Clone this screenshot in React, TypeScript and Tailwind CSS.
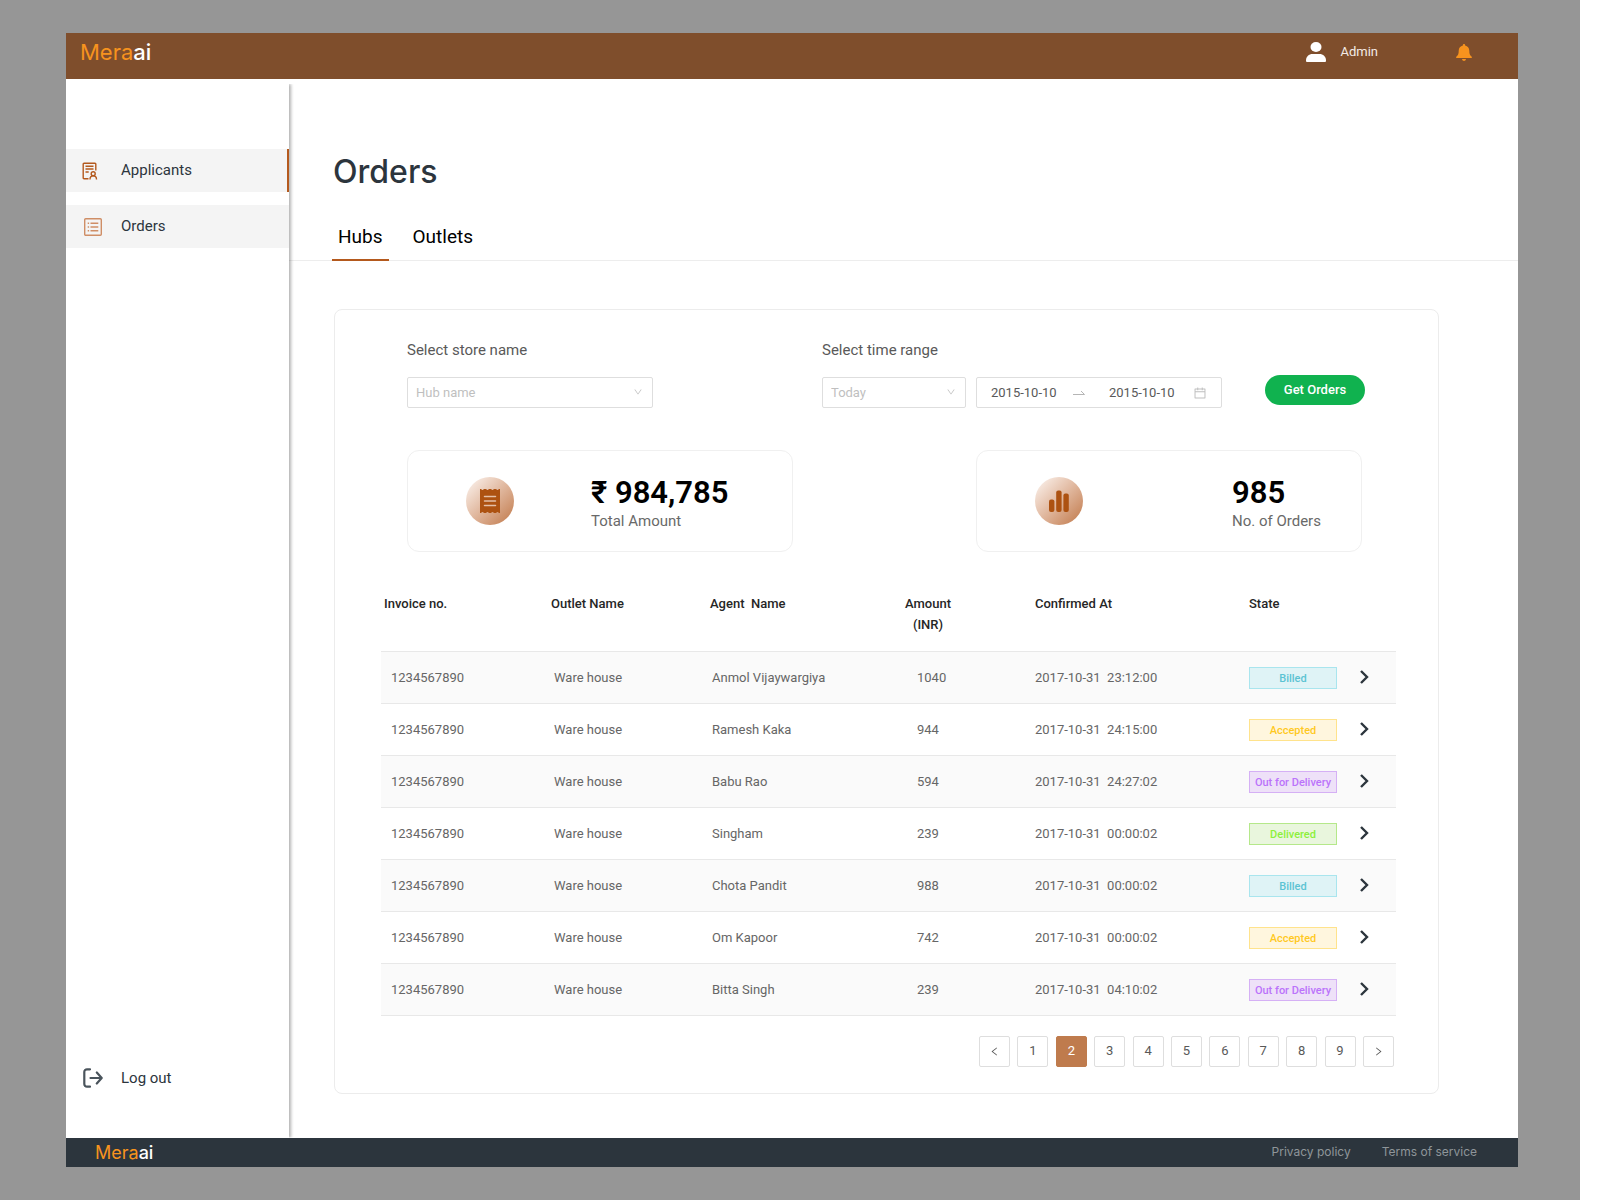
import { AiOutlineCalendar, AiOutlineDown, AiOutlineLeft, AiOutlineRight } from 'react-icons/ai';

type OrderState = 'Billed' | 'Accepted' | 'Out for Delivery' | 'Delivered';

interface Order {
  id: number;
  invoice: string;
  outlet: string;
  agent: string;
  amount: number;
  date: string;
  time: string;
  state: OrderState;
}

const orders: Order[] = [
  { id: 1, invoice: '1234567890', outlet: 'Ware house', agent: 'Anmol Vijaywargiya', amount: 1040, date: '2017-10-31', time: '23:12:00', state: 'Billed' },
  { id: 2, invoice: '1234567890', outlet: 'Ware house', agent: 'Ramesh Kaka', amount: 944, date: '2017-10-31', time: '24:15:00', state: 'Accepted' },
  { id: 3, invoice: '1234567890', outlet: 'Ware house', agent: 'Babu Rao', amount: 594, date: '2017-10-31', time: '24:27:02', state: 'Out for Delivery' },
  { id: 4, invoice: '1234567890', outlet: 'Ware house', agent: 'Singham', amount: 239, date: '2017-10-31', time: '00:00:02', state: 'Delivered' },
  { id: 5, invoice: '1234567890', outlet: 'Ware house', agent: 'Chota Pandit', amount: 988, date: '2017-10-31', time: '00:00:02', state: 'Billed' },
  { id: 6, invoice: '1234567890', outlet: 'Ware house', agent: 'Om Kapoor', amount: 742, date: '2017-10-31', time: '00:00:02', state: 'Accepted' },
  { id: 7, invoice: '1234567890', outlet: 'Ware house', agent: 'Bitta Singh', amount: 239, date: '2017-10-31', time: '04:10:02', state: 'Out for Delivery' },
];

const stateStyles: Record<OrderState, string> = {
  Billed: 'bg-[#dff3f6] border-[#a9e5ee] text-[#5cc3d3]',
  Accepted: 'bg-[#fff6de] border-[#ffe38c] text-[#ffc91f]',
  'Out for Delivery': 'bg-[#eee1f8] border-[#d5b0f5] text-[#bb73fb]',
  Delivered: 'bg-[#e9f6dd] border-[#b5e88a] text-[#8cf03c]',
};

const pages = [1, 2, 3, 4, 5, 6, 7, 8, 9];

function Logo({ className }: { className: string }) {
  return (
    <span className={`font-[Inter,sans-serif] text-[#f7931e] ${className}`}>
      Mera<span className="font-medium text-white">ai</span>
    </span>
  );
}

function ApplicantsIcon() {
  return (
    <svg width="16" height="18" viewBox="0 0 16 18" fill="none" stroke="#b4591d" strokeWidth="1.4">
      <path d="M6.5 16.8H2a.8.8 0 0 1-.8-.8V2a.8.8 0 0 1 .8-.8h11a.8.8 0 0 1 .8.8v6.500" />
      <path d="M3.500 4.300h8M3.500 7h8M3.500 10h3.200" />
      <circle cx="11.200" cy="11.700" r="2" />
      <path d="M8 17.400c0-2 1.200-3.500 3.200-3.500s3.300 1.500 3.300 3.500" />
    </svg>
  );
}

function OrdersIcon() {
  return (
    <svg width="18" height="18" viewBox="0 0 18 18" fill="none" stroke="#cf8e66" strokeWidth="1.4">
      <rect x="0.7" y="0.7" width="16.6" height="16.6" rx="1" />
      <path d="M6.500 5.300h7.800M6.500 9h7.800M6.500 12.700h7.800M3.700 5.300h1.400M3.700 9h1.400M3.700 12.700h1.400" />
    </svg>
  );
}

function LogoutIcon() {
  return (
    <svg width="20" height="20" viewBox="0 0 20 20" fill="none" stroke="#4a545c" strokeWidth="2.2" strokeLinecap="round" strokeLinejoin="round">
      <path d="M7 1.300H4a2.700 2.700 0 0 0-2.700 2.700v12A2.700 2.700 0 0 0 4 18.700h3" />
      <path d="M7.500 10H18.500M13.800 4.500L18.700 10l-4.900 5.500" />
    </svg>
  );
}

function UserIcon() {
  return (
    <svg width="20" height="20" viewBox="0 0 20 20" fill="white">
      <ellipse cx="10" cy="5" rx="5.500" ry="5" />
      <path d="M0 19v-.5C0 14.500 3 12 6.500 12h7c3.500 0 6.500 2.500 6.500 6.500v.5a1 1 0 0 1-1 1H1a1 1 0 0 1-1-1z" />
    </svg>
  );
}

function BellIcon() {
  return (
    <svg width="16" height="17" viewBox="0 0 16 17" fill="#f7931e">
      <path d="M8 0c.7 0 1.100.5 1.100 1.100v.5c2.500.5 4.200 2.500 4.200 5.200 0 3 .4 4.500 2.400 5.900.5.400.3 1.300-.4 1.300H.7c-.7 0-.9-.9-.4-1.300 2-1.400 2.400-2.900 2.400-5.900 0-2.700 1.700-4.700 4.200-5.200v-.5C6.900.5 7.300 0 8 0z" />
      <path d="M6 15h4c-.2 1.200-1 2-2 2s-1.800-.8-2-2z" />
    </svg>
  );
}

function ReceiptIcon() {
  return (
    <svg width="20" height="24" viewBox="0 0 20 24">
      <path
        fill="#ad5211"
        d="M0 0h1.200a1.400 1.400 0 0 0 2.600 0h2.400a1.400 1.400 0 0 0 2.600 0h2.400a1.400 1.400 0 0 0 2.600 0h2.400a1.400 1.400 0 0 0 2.600 0H20v24h-1.200a1.400 1.400 0 0 0-2.600 0h-2.400a1.400 1.400 0 0 0-2.600 0H8.800a1.400 1.400 0 0 0-2.600 0H3.800a1.400 1.400 0 0 0-2.600 0H0z"
      />
      <path stroke="#e4c0a8" strokeWidth="1.500" strokeLinecap="round" d="M4.500 7.500h11M4.500 12h11M4.500 16.500h11" />
    </svg>
  );
}

function BarsIcon() {
  return (
    <svg width="20" height="22" viewBox="0 0 20 22" fill="#ad5211">
      <rect x="0" y="9.500" width="5.400" height="12.500" rx="2" />
      <rect x="7.200" y="0.500" width="5.400" height="21.500" rx="2" />
      <rect x="14.400" y="3.500" width="5.400" height="18.500" rx="2" />
    </svg>
  );
}

function StatCard({ icon, value, label, gap }: { icon: React.ReactNode; value: string; label: string; gap: string }) {
  return (
    <div className={`flex h-[102px] w-[386px] items-center rounded-xl border border-[#f0f0f0] pl-[58px] ${gap}`}>
      <div className="flex size-12 items-center justify-center rounded-full bg-linear-to-br from-[#fdf8f5] to-[#bf7746]">
        {icon}
      </div>
      <div className="pt-2">
        <p className="text-[31px] leading-8 font-semibold text-black">{value}</p>
        <p className="text-[15px] leading-6 text-[#696969]">{label}</p>
      </div>
    </div>
  );
}

function StoreSelect({ id, placeholder, className }: { id: string; placeholder: string; className: string }) {
  return (
    <div className={`relative ${className}`}>
      <select
        id={id}
        className="h-[31px] w-full appearance-none rounded-xs border border-[#dedede] bg-white px-2 text-[13px] text-[#bfbfbf]"
      >
        <option>{placeholder}</option>
      </select>
      <AiOutlineDown className="pointer-events-none absolute top-[10px] right-[10px] text-[#bfbfbf]" size={10} />
    </div>
  );
}

export default function App() {
  return (
    <div className="bg-white pr-[17px] font-[Roboto,sans-serif]">
      <div className="flex min-h-screen flex-col bg-[#969696] pt-[33px] pr-[62px] pb-[34px] pl-[66px]">
        <header className="flex h-[46px] items-center bg-[#7f4e2c] pr-[46px] pb-2 pl-[14px]">
          <Logo className="text-[22px]" />
          <div className="ml-auto flex items-center">
            <UserIcon />
            <span className="ml-[14px] text-[13px] text-[#f3ebe6]">Admin</span>
            <button type="button" aria-label="Notifications" className="ml-[78px]">
              <BellIcon />
            </button>
          </div>
        </header>

        <div className="flex flex-1 bg-white">
          <aside className="mt-[5px] flex w-[223px] shrink-0 flex-col pt-[65px] text-[15px] text-[#2c353d] shadow-[2px_0_3px_rgba(0,0,0,0.3)] [clip-path:inset(0_-6px_0_0)]">
            <nav className="flex flex-col gap-[13px]">
              <a href="#applicants" className="flex h-[43px] items-center border-r-2 border-[#b4591d] bg-[#f4f4f4] pl-4">
                <span className="w-[39px]">
                  <ApplicantsIcon />
                </span>
                Applicants
              </a>
              <a href="#orders" className="flex h-[43px] items-center bg-[#f4f4f4] pl-4">
                <span className="w-[39px] pl-[2px]">
                  <OrdersIcon />
                </span>
                Orders
              </a>
            </nav>
            <a href="#logout" className="mt-auto mb-12 flex items-center pl-4">
              <span className="w-[39px] pl-px">
                <LogoutIcon />
              </span>
              Log out
            </a>
          </aside>

          <main className="min-w-0 flex-1 pb-11">
            <h1 className="pt-[69px] pl-11 font-[Inter,sans-serif] text-[32px] leading-12 font-medium text-[#2c353d]">
              Orders
            </h1>
            <div role="tablist" className="mt-[23px] flex h-[42px] gap-[18px] border-b border-[#ededed] pl-[43px] text-[19px] text-black">
              <button type="button" role="tab" aria-selected="true" className="h-[42px] border-b-2 border-[#b4591d] px-[6px] pb-1">
                Hubs
              </button>
              <button type="button" role="tab" aria-selected="false" className="h-[42px] border-b-2 border-transparent px-[6px] pb-1">
                Outlets
              </button>
            </div>

            <section className="mt-12 mr-[79px] ml-[45px] rounded-lg border border-[#ececec] pr-[42px] pb-[26px] pl-[46px]">
              <div className="flex items-end pt-7 pl-[26px]">
                <div>
                  <label htmlFor="store" className="mb-[15px] block text-[15px] leading-6 text-[#595959]">
                    Select store name
                  </label>
                  <StoreSelect id="store" placeholder="Hub name" className="w-[246px]" />
                </div>
                <div className="ml-[169px]">
                  <label htmlFor="range" className="mb-[15px] block text-[15px] leading-6 text-[#595959]">
                    Select time range
                  </label>
                  <div className="flex gap-[10px]">
                    <StoreSelect id="range" placeholder="Today" className="w-36" />
                    <div className="flex h-[31px] w-[246px] items-center rounded-xs border border-[#dedede] px-[14px] text-[#595959]">
                      <input aria-label="Start date" defaultValue="2015-10-10" className="w-[82px] text-[13px]" />
                      <svg width="12" height="6" viewBox="0 0 12 6" fill="none" stroke="#b5b5b5">
                        <path d="M0 4.500h11.500L8 1" />
                      </svg>
                      <input aria-label="End date" defaultValue="2015-10-10" className="ml-6 w-[84px] text-[13px]" />
                      <AiOutlineCalendar className="shrink-0 text-[#bfbfbf]" size={14} />
                    </div>
                  </div>
                </div>
                <button type="button" className="mb-[3px] ml-[43px] h-[30px] w-[100px] rounded-full bg-[#10b24f] text-[13px] font-medium text-white">
                  Get Orders
                </button>
              </div>

              <div className="mt-[42px] flex gap-[183px] pl-[26px]">
                <StatCard icon={<ReceiptIcon />} value="₹ 984,785" label="Total Amount" gap="gap-[77px]" />
                <StatCard icon={<BarsIcon />} value="985" label="No. of Orders" gap="gap-[149px]" />
              </div>

              <table className="mt-[41px] w-full table-fixed text-left text-[13px] text-[#666666]">
                <colgroup>
                  <col className="w-[163px]" />
                  <col className="w-[158px]" />
                  <col className="w-[196px]" />
                  <col className="w-[126px]" />
                  <col className="w-[214px]" />
                  <col className="w-[108px]" />
                  <col />
                </colgroup>
                <thead>
                  <tr className="h-[58px] border-b border-[#e8e8e8] align-top leading-[21px] text-[#262626]">
                    <th className="pl-[3px] font-medium">Invoice no.</th>
                    <th className="pl-[7px] font-medium">Outlet Name</th>
                    <th className="pl-2 font-medium whitespace-pre">Agent  Name</th>
                    <th className="pl-[7px] font-medium">
                      <span className="inline-block text-center">
                        Amount
                        <br />
                        (INR)
                      </span>
                    </th>
                    <th className="pl-[11px] font-medium">Confirmed At</th>
                    <th className="pl-[11px] font-medium">State</th>
                    <td />
                  </tr>
                </thead>
                <tbody>
                  {orders.map((order) => (
                    <tr key={order.id} className="h-[52px] border-b border-[#e8e8e8] odd:bg-[#fafafa]">
                      <td className="pt-[2px] pl-[10px]">{order.invoice}</td>
                      <td className="pt-[2px] pl-[10px]">{order.outlet}</td>
                      <td className="pt-[2px] pl-[10px]">{order.agent}</td>
                      <td className="pt-[2px] pl-[19px]">{order.amount}</td>
                      <td className="pt-[2px] pl-[11px] whitespace-pre">
                        {order.date}  {order.time}
                      </td>
                      <td className="pt-[2px] pl-[11px]">
                        <span
                          className={`flex h-[22px] w-[88px] items-center justify-center border pt-[2px] text-[11px] font-medium whitespace-nowrap ${stateStyles[order.state]}`}
                        >
                          {order.state}
                        </span>
                      </td>
                      <td className="pl-[14px]">
                        <button type="button" aria-label={`Open order ${order.id}`} className="block">
                          <svg width="9" height="14" viewBox="0 0 9 14" fill="none" stroke="#2c353d" strokeWidth="2.400">
                            <path d="M1 1l6 6-6 6" />
                          </svg>
                        </button>
                      </td>
                    </tr>
                  ))}
                </tbody>
              </table>

              <div className="mt-5 flex justify-end">
                <div className="mr-[2px] flex w-[415px] justify-between text-[13px] text-[#595959]">
                  <button
                    type="button"
                    aria-label="Previous page"
                    className="flex h-[31px] w-[31px] items-center justify-center rounded-xs border border-[#dedede]"
                  >
                    <AiOutlineLeft size={11} />
                  </button>
                  {pages.map((page) => (
                    <button
                      key={page}
                      type="button"
                      className={`h-[31px] w-[31px] rounded-xs border ${
                        page === 2 ? 'border-[#bf7b4d] bg-[#bf7b4d] text-white' : 'border-[#dedede]'
                      }`}
                    >
                      {page}
                    </button>
                  ))}
                  <button
                    type="button"
                    aria-label="Next page"
                    className="flex h-[31px] w-[31px] items-center justify-center rounded-xs border border-[#dedede]"
                  >
                    <AiOutlineRight size={11} />
                  </button>
                </div>
              </div>
            </section>
          </main>
        </div>

        <footer className="flex h-[29px] items-center bg-[#2c353d] pr-[41px] pl-[29px]">
          <Logo className="text-[18px]" />
          <div className="ml-auto flex gap-[31px] font-[Inter,sans-serif] text-xs text-[#8f959a]">
            <a href="#privacy">Privacy policy</a>
            <a href="#terms">Terms of service</a>
          </div>
        </footer>
      </div>
    </div>
  );
}
